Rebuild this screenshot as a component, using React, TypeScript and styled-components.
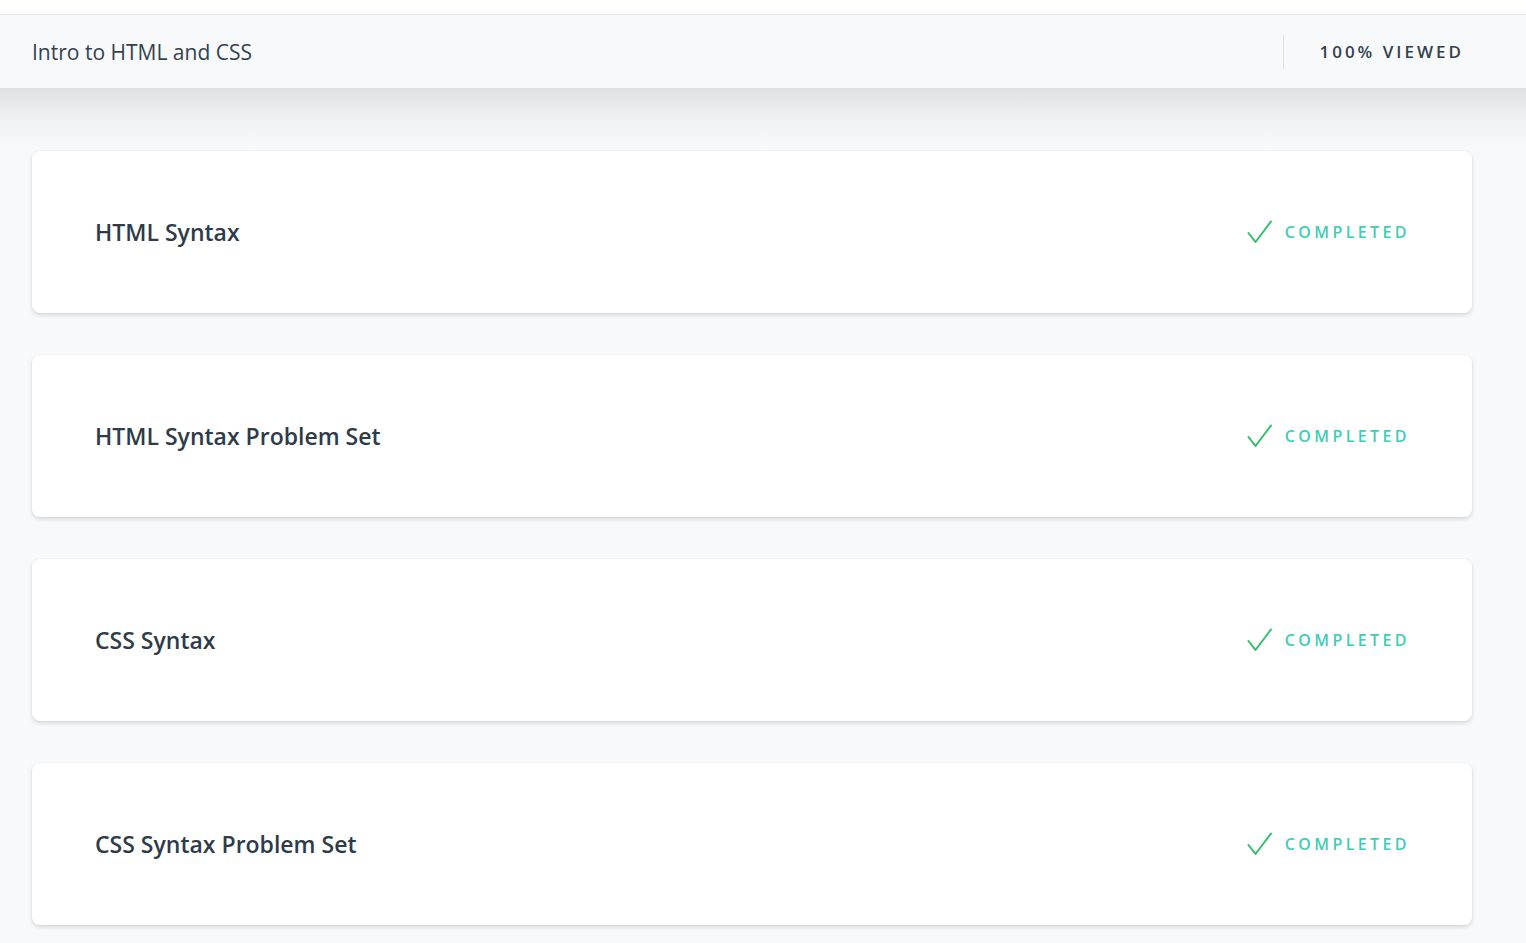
import React from 'react';
import styled, { createGlobalStyle } from 'styled-components';

const GlobalStyle = createGlobalStyle`
  html, body {
    margin: 0;
    padding: 0;
    background: #f8f9fb;
    font-family: 'Open Sans', 'Noto Sans', sans-serif;
  }
`;

const Page = styled.div`
  min-height: 943px;
  background: #f8f9fb;
`;

const TopStrip = styled.div`
  height: 14px;
  background: #ffffff;
  border-bottom: 1px solid #dfe4ea;
`;

const Header = styled.header`
  position: relative;
  z-index: 1;
  height: 73px;
  display: flex;
  align-items: center;
  justify-content: space-between;
  padding: 0 62px 0 32px;
  background: #f8f9fb;

  &::after {
    content: '';
    position: absolute;
    left: 0;
    right: 0;
    top: 100%;
    height: 62px;
    background: linear-gradient(rgba(0, 0, 0, 0.1), rgba(0, 0, 0, 0.03) 50%, rgba(0, 0, 0, 0));
    pointer-events: none;
  }
`;

const Title = styled.h1`
  margin: 0;
  font-size: 21px;
  font-weight: 400;
  color: #34424f;
`;

const Progress = styled.div`
  display: flex;
  align-items: center;
  height: 34px;
  padding-left: 35px;
  border-left: 1px solid #dce3ea;
  font-size: 17px;
  font-weight: 600;
  letter-spacing: 3px;
  color: #34424f;
`;

const List = styled.main`
  display: flex;
  flex-direction: column;
  gap: 42px;
  padding: 63px 54px 40px 32px;
`;

const Card = styled.div`
  height: 162px;
  display: flex;
  align-items: center;
  justify-content: space-between;
  padding: 0 62px 0 63px;
  background: #ffffff;
  border-radius: 8px;
  box-shadow: 0 2px 4px rgba(0, 0, 0, 0.14), 0 0 2px rgba(0, 0, 0, 0.05);
`;

const CardTitle = styled.div`
  font-size: 23px;
  font-weight: 600;
  color: #2f3b48;
`;

const Status = styled.div`
  display: flex;
  align-items: center;
  gap: 12px;
  font-size: 16px;
  font-weight: 600;
  letter-spacing: 3.4px;
  color: #3fcdb6;
`;

const Check = () => (
  <svg width="26" height="26" viewBox="0 0 26 26" fill="none">
    <path d="M1.5 14 L8.5 23 L24 2.5" stroke="#2fbf68" strokeWidth="2" strokeLinecap="round" strokeLinejoin="round" />
  </svg>
);

const lessons = ['HTML Syntax', 'HTML Syntax Problem Set', 'CSS Syntax', 'CSS Syntax Problem Set'];

export default function App() {
  return (
    <Page>
      <GlobalStyle />
      <TopStrip />
      <Header>
        <Title>Intro to HTML and CSS</Title>
        <Progress>100% VIEWED</Progress>
      </Header>
      <List>
        {lessons.map((name) => (
          <Card key={name}>
            <CardTitle>{name}</CardTitle>
            <Status>
              <Check />
              COMPLETED
            </Status>
          </Card>
        ))}
      </List>
    </Page>
  );
}
